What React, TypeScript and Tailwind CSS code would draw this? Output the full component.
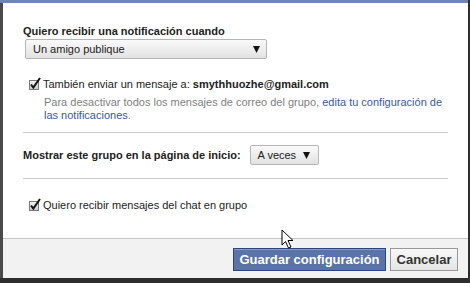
import React from 'react';

const Check: React.FC = () => (
  <svg width="12" height="14" viewBox="0 0 12 14" className="shrink-0">
    <defs>
      <linearGradient id="cb" x1="0" y1="0" x2="0" y2="1">
        <stop offset="0" stopColor="#f4f4f4" />
        <stop offset="1" stopColor="#c8c8c8" />
      </linearGradient>
    </defs>
    <rect x="0.5" y="3.5" width="9" height="9" fill="url(#cb)" stroke="#7a7a7a" />
    <path d="M2 7.5 L4.3 10.5 L11 1" fill="none" stroke="#111" strokeWidth="2" />
  </svg>
);

const Arrow: React.FC = () => (
  <svg width="7" height="7" viewBox="0 0 7 7" className="shrink-0">
    <path d="M0 0 H7 L3.5 7 Z" fill="#111" />
  </svg>
);

const Cursor: React.FC = () => (
  <svg width="14" height="21" viewBox="0 0 14 21" className="absolute left-[281px] top-[229px]">
    <path d="M1 1 V16 L4.5 12.5 L7.5 19 L10 18 L7 11.5 H12 Z" fill="#fff" stroke="#000" strokeWidth="1" strokeLinejoin="round" />
  </svg>
);

export default function App() {
  return (
    <div className="relative w-[470px] h-[283px] bg-[#2e2e2e] overflow-hidden font-['Liberation_Sans',Arial,sans-serif] text-[11px] text-[#222]">
      <div className="flex flex-col w-[468px] h-[278px]">
        <div className="h-[3px] bg-[#6d84b4]" />
        <div className="flex flex-1 border-l-[3px] border-[#4a4a4a]">
          <div className="flex flex-col flex-1 bg-white">
            <div className="flex flex-col flex-1 px-[20px] pt-[21px]">
              <div className="font-bold leading-[14px]">Quiero recibir una notificación cuando</div>
              <div className="mt-[1px] ml-[2px] w-[242px] h-[20px] flex items-center justify-between pl-[7px] pr-[6px] border border-[#b5b5b5] bg-gradient-to-b from-[#fafafa] to-[#e2e2e2] rounded-[2px]">
                <span className="leading-[14px]">Un amigo publique</span>
                <Arrow />
              </div>

              <div className="mt-[18px] ml-[6px] flex items-center gap-[2px] leading-[14px]">
                <Check />
                <span>
                  También enviar un mensaje a: <span className="font-bold">smythhuozhe@gmail.com</span>
                </span>
              </div>
              <div className="mt-[5px] pl-[21px] leading-[13px] text-[#808080]">
                <div>
                  Para desactivar todos los mensajes de correo del grupo,{' '}
                  <span className="text-[#3b5998]">edita tu configuración de</span>
                </div>
                <div>
                  <span className="text-[#3b5998]">las notificaciones</span>.
                </div>
              </div>

              <div className="mt-[10px] h-px bg-[#c9c9c9]" />

              <div className="mt-[12px] flex items-center gap-[9px]">
                <span className="font-bold leading-[14px]">Mostrar este grupo en la página de inicio:</span>
                <div className="w-[69px] h-[20px] flex items-center justify-between pl-[7px] pr-[8px] border border-[#b5b5b5] bg-gradient-to-b from-[#fafafa] to-[#e2e2e2] rounded-[2px]">
                  <span className="leading-[14px]">A veces</span>
                  <Arrow />
                </div>
              </div>

              <div className="mt-[13px] h-px bg-[#c9c9c9]" />

              <div className="mt-[19px] ml-[6px] flex items-center gap-[2px] leading-[14px]">
                <Check />
                <span>Quiero recibir mensajes del chat en grupo</span>
              </div>
            </div>

            <div className="h-[40px] border-t border-[#c4c4c4] bg-[#f2f2f2] flex justify-end items-start pt-[9px] pr-[10px] gap-[4px]">
              <button className="w-[153px] h-[23px] border border-[#29447e] bg-[#5b74a8] text-white font-bold text-[13px] leading-[16px] shadow-[inset_0_1px_0_#8a9cc2]">
                Guardar configuración
              </button>
              <button className="w-[68px] h-[23px] border border-[#999] bg-gradient-to-b from-[#f8f8f8] to-[#e4e4e4] text-[#333] font-bold text-[13px] leading-[16px]">
                Cancelar
              </button>
            </div>
          </div>
        </div>
      </div>
      <Cursor />
    </div>
  );
}
